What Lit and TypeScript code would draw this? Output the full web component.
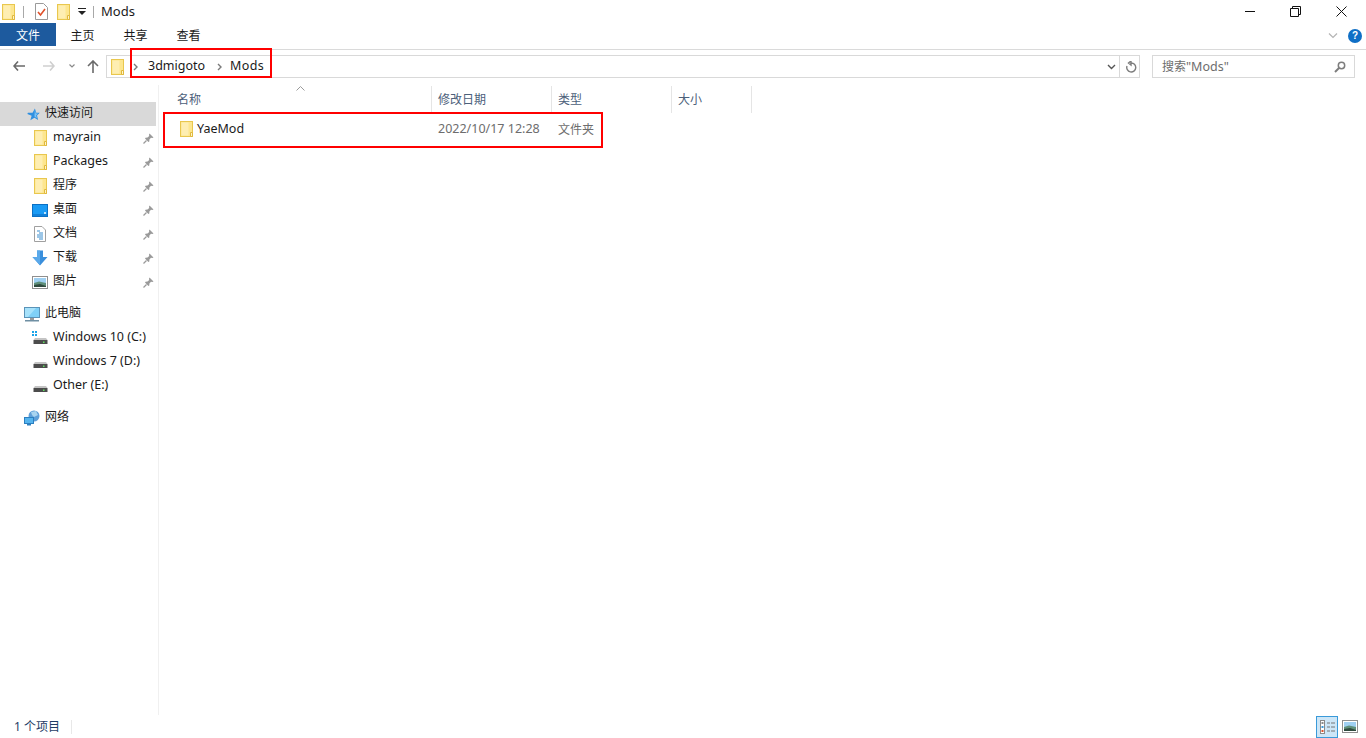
import { LitElement, html, css, svg } from 'lit';
import { customElement } from 'lit/decorators.js';

const folder = html`<svg width="13" height="16" viewBox="0 0 13 16">
  <rect x="0.5" y="0.5" width="12" height="15" fill="#fde68f" stroke="#e9c74e"></rect>
  <rect x="1.5" y="1.5" width="7" height="13" fill="#feeeb2"></rect>
  <path d="M10.5 15.5V11.5H12.5V15.5Z" fill="#fff4c9" stroke="#e0b93e"></path>
</svg>`;

const chev = html`<svg width="7" height="8" viewBox="0 0 7 8"><path d="M2 1l3 3-3 3" fill="none" stroke="#7a7a7a" stroke-width="1.4"></path></svg>`;

const pin = html`<svg width="11" height="11" viewBox="0 0 11 11">
  <path d="M6.5 0.5L10.5 4.5 9.3 5 8 4.8 6.4 6.5 6.3 8.5 5.4 9 2 5.6 2.5 4.7 4.5 4.6 6.2 3 6 1.7Z" fill="#9a9a9a"></path>
  <path d="M3.5 7.5L0.5 10.5" stroke="#9a9a9a" stroke-width="1.2"></path>
</svg>`;

const star = html`<svg class="star" width="13" height="13" viewBox="0 0 14 14">
  <path d="M8.5 0.5L10 5 13.8 5.2 10.8 8 12 13 8 10.4 3.6 13.2 5 8.4 0.4 6.4 1 5.2 6 5Z" fill="#2f8fe0"></path>
  <path d="M8.5 2L9.4 5.8 12 6 9.8 7.8 10.6 11 8 9.2Z" fill="#7cc3f5"></path>
</svg>`;

const desktop = html`<svg width="16" height="13" viewBox="0 0 16 13">
  <rect x="0.5" y="0.5" width="15" height="12" fill="#1a9bf5" stroke="#0c70c4"></rect>
  <rect x="1" y="10" width="14" height="2" fill="#1180d8"></rect>
  <rect x="12" y="8" width="2" height="2" fill="#bfe3fb"></rect>
</svg>`;

const doc = html`<svg width="12" height="16" viewBox="0 0 12 16">
  <path d="M0.5 0.5H8L11.5 4V15.5H0.5Z" fill="#fff" stroke="#a0a0a0"></path>
  <path d="M3 5H6M5 7H9M3 9H9M3 11H9M5 13H9" stroke="#3a8ecf" stroke-width="1"></path>
</svg>`;

const download = html`<svg width="16" height="16" viewBox="0 0 16 16">
  <path d="M5 0.5H11V7H15.5L8 15.5 0.5 7H5Z" fill="#3a8fdc"></path>
  <path d="M5 0.5H8V15L0.5 7H5Z" fill="#5aa9ea"></path>
</svg>`;

const picture = html`<svg width="16" height="13" viewBox="0 0 16 13">
  <rect x="0.5" y="0.5" width="15" height="12" fill="#fff" stroke="#8f8f8f"></rect>
  <rect x="2" y="2" width="12" height="5" fill="#9fd0f2"></rect>
  <path d="M2 7L7 5.5 14 7V11H2Z" fill="#5f8f7a"></path>
  <path d="M2 9L8 8 14 10V11H2Z" fill="#2f4a3e"></path>
</svg>`;

const monitor = html`<svg width="16" height="15" viewBox="0 0 16 15">
  <rect x="0.5" y="0.5" width="15" height="10" fill="#7fd0f7" stroke="#5a93b8"></rect>
  <path d="M1 1H12L4 10H1Z" fill="#a7e2fb"></path>
  <rect x="6" y="11" width="4" height="2" fill="#9a9a9a"></rect>
  <rect x="1" y="13" width="14" height="1.5" fill="#6f8fa3"></rect>
</svg>`;

const drive = (win: boolean) => html`<svg width="16" height="14" viewBox="0 0 16 14">
  ${win ? svg`<path d="M0 0H2V2H0ZM3 0H5V2H3ZM0 3H2V5H0ZM3 3H5V5H3Z" fill="#1aa3e8"></path>` : ''}
  <path d="M3 7H14L15.5 9H1.5Z" fill="#c4c4c4"></path>
  <rect x="1.5" y="9" width="14" height="4" fill="#4c4c4c"></rect>
  <rect x="11" y="10.5" width="1.5" height="1.5" fill="#5fe05f"></rect>
</svg>`;

const network = html`<svg width="16" height="16" viewBox="0 0 16 16">
  <circle cx="10" cy="6" r="5.5" fill="#5f9fd8"></circle>
  <path d="M7 2L12 1 14 5 10 7 8 5Z" fill="#a8d4f0"></path>
  <rect x="0.5" y="7.5" width="9" height="6" fill="#55b4ee" stroke="#2c7fc0"></rect>
  <rect x="3" y="14" width="4" height="1.5" fill="#2c7fc0"></rect>
</svg>`;

type NavRow = { icon: unknown; label: string };

const quick: NavRow[] = [
  { icon: folder, label: 'mayrain' },
  { icon: folder, label: 'Packages' },
  { icon: folder, label: '程序' },
  { icon: desktop, label: '桌面' },
  { icon: doc, label: '文档' },
  { icon: download, label: '下载' },
  { icon: picture, label: '图片' },
];

const drives: NavRow[] = [
  { icon: drive(true), label: 'Windows 10 (C:)' },
  { icon: drive(false), label: 'Windows 7 (D:)' },
  { icon: drive(false), label: 'Other (E:)' },
];

@customElement('app-root')
export class AppRoot extends LitElement {
  static styles = css`
    :host {
      display: flex;
      flex-direction: column;
      height: 100vh;
      background: #fff;
      color: #1a1a1a;
      font: 12px 'Noto Sans', 'Noto Sans CJK SC', sans-serif;
      overflow: hidden;
      position: relative;
    }
    svg { display: block; flex: none; }
    .l { font-size: 12.5px; }
    .t { margin-bottom: 2px; }

    .titlebar { height: 23px; display: flex; align-items: center; flex: none; padding-left: 2px; }
    .qat-sep { width: 1px; height: 12px; background: #a8a8a8; flex: none; }
    .qat-sep.a { margin-left: 8px; }
    .qat-sep.b { margin-left: 7px; }
    .qat-doc { margin-left: 11px; }
    .qat-folder { margin-left: 9px; }
    .qat-drop { margin-left: 8px; }
    .title { font-size: 13px; margin: 0 0 2px 7px; flex: 1; }
    .win { display: flex; padding-right: 19px; align-items: center; }
    .win svg + svg { margin-left: 34px; }
    .win svg:last-child { margin-left: 35px; }

    .tabs { height: 26px; border-bottom: 1px solid #dadada; display: flex; align-items: flex-start; flex: none; }
    .tab { height: 23px; line-height: 25px; text-align: center; }
    .tab.file-tab { width: 56px; background: #1d5a9e; color: #fff; }
    .tab.plain { width: 53px; }
    .tabs-right { margin-left: auto; display: flex; align-items: center; gap: 10px; padding: 6px 4px 0 0; }
    .help {
      width: 14px; height: 14px; border-radius: 50%; background: #0f6fc6; color: #fff;
      font: bold 10px/14px 'Liberation Sans', sans-serif; text-align: center;
    }

    .navrow { height: 35px; display: flex; align-items: flex-start; padding-top: 5px; box-sizing: border-box; flex: none; }
    .nav-btns { width: 106px; height: 22px; display: flex; align-items: center; flex: none; }
    .back { margin-left: 13px; }
    .fwd { margin-left: 18px; }
    .recent { margin-left: 14px; }
    .up { margin-left: 12px; }
    .addr {
      width: 1034px; height: 23px; box-sizing: border-box; border: 1px solid #d9d9d9;
      display: flex; align-items: center; padding-left: 4px;
    }
    .c1 { margin-left: 8px; }
    .crumb { margin: 0 0 2px 9px; }
    .c2 { margin-left: 11px; }
    .crumb.last { margin-left: 7px; letter-spacing: 0.4px; }
    .addr-end { margin-left: auto; display: flex; align-items: center; height: 100%; }
    .addr-sep { width: 1px; height: 100%; background: #d9d9d9; margin: 0 3px; }
    .refresh { margin: 0 2px; }
    .search {
      width: 203px; height: 23px; margin-left: 12px; box-sizing: border-box; border: 1px solid #d9d9d9;
      display: flex; align-items: center; justify-content: space-between; padding: 0 8px 0 9px; color: #6d6d6d;
    }

    .main { flex: 1; display: flex; min-height: 0; }
    .side { width: 158px; border-right: 1px solid #f0f0f0; flex: none; padding-top: 17px; }
    .group { margin-bottom: 8px; }
    .item { height: 24px; display: flex; align-items: center; width: 156px; box-sizing: border-box; }
    .item .t { margin-bottom: 4px; }
    .item.head { padding-left: 24px; }
    .item.sel { background: #d9d9d9; }
    .item.child { padding-left: 32px; }
    .ico { width: 16px; display: flex; justify-content: center; flex: none; margin-right: 5px; }
    .star { margin-left: 3px; }
    .pin { margin: 0 2px 0 auto; }

    .list { flex: 1; min-width: 0; position: relative; padding-top: 1px; }
    .cols { display: grid; grid-template-columns: 273px 120px 120px 80px; height: 27px; }
    .col {
      border-right: 1px solid #e5e5e5; color: #4c607a; padding-left: 6px; box-sizing: border-box;
      display: flex; align-items: center; position: relative;
    }
    .col.name { padding-left: 18px; }
    .sort { position: absolute; left: 137px; top: 0; }
    .row {
      display: grid; grid-template-columns: 273px 120px 120px; height: 24px; margin-top: 4px; align-items: center;
    }
    .fname { display: flex; align-items: center; gap: 4px; padding-left: 21px; }
    .meta { color: #6d6d6d; padding-left: 6px; margin-bottom: 1px; }

    .status { height: 23px; display: flex; align-items: center; flex: none; padding-left: 14px; color: #1f3d66; }
    .status-sep { width: 1px; height: 14px; background: #e8e8e8; margin-left: 11px; }
    .views { margin-left: auto; display: flex; align-items: center; gap: 4px; padding-right: 8px; }
    .view-on {
      width: 22px; height: 22px; box-sizing: border-box; background: #cde6f7; border: 1px solid #3a9ad9;
      display: flex; align-items: center; justify-content: center;
    }

    .mark { position: absolute; border: 2px solid #f00; box-sizing: border-box; pointer-events: none; }
    .addr-mark { left: 130px; top: 48px; width: 142px; height: 30px; }
    .row-mark { left: 163px; top: 112px; width: 440px; height: 36px; }
  `;

  private navItem(r: NavRow, pinned: boolean) {
    return html`<div class="item child">
      <span class="ico">${r.icon}</span>
      <span class="t ${/[a-z]/i.test(r.label) ? 'l' : ''}">${r.label}</span>
      ${pinned ? html`<span class="pin">${pin}</span>` : ''}
    </div>`;
  }

  render() {
    return html`
      <div class="titlebar">
        ${folder}
        <span class="qat-sep a"></span>
        <svg class="qat-doc" width="13" height="17" viewBox="0 0 13 17">
          <path d="M0.5 0.5H8.5L12.5 4.5V16.5H0.5Z" fill="#fff" stroke="#9a9a9a"></path>
          <path d="M3 9L5.5 12 10 6" fill="none" stroke="#e0502a" stroke-width="1.6"></path>
        </svg>
        <span class="qat-folder">${folder}</span>
        <svg class="qat-drop" width="8" height="7" viewBox="0 0 8 7"><path d="M0 0H8V1H0ZM0 3H8L4 7Z" fill="#222"></path></svg>
        <span class="qat-sep b"></span>
        <span class="title">Mods</span>
        <div class="win">
          <svg width="11" height="11" viewBox="0 0 11 11"><path d="M0 5.5H10" stroke="#111"></path></svg>
          <svg width="11" height="11" viewBox="0 0 11 11"><path d="M2.5 2.5V0.5H10.5V8.5H8.5M0.5 2.5H8.5V10.5H0.5Z" fill="none" stroke="#111"></path></svg>
          <svg width="11" height="11" viewBox="0 0 11 11"><path d="M0.5 0.5L10.5 10.5M10.5 0.5L0.5 10.5" stroke="#111"></path></svg>
        </div>
      </div>

      <div class="tabs">
        <div class="tab file-tab">文件</div>
        <div class="tab plain">主页</div>
        <div class="tab plain">共享</div>
        <div class="tab plain">查看</div>
        <div class="tabs-right">
          <svg width="10" height="6" viewBox="0 0 10 6"><path d="M1 0.5L5 4.5 9 0.5" fill="none" stroke="#b4b4b4" stroke-width="1.2"></path></svg>
          <div class="help">?</div>
        </div>
      </div>

      <div class="navrow">
        <div class="nav-btns">
          <svg class="back" width="12" height="10" viewBox="0 0 12 10"><path d="M5 0.5L1 5 5 9.5M1 5H12" fill="none" stroke="#6a6a6a" stroke-width="1.6"></path></svg>
          <svg class="fwd" width="12" height="10" viewBox="0 0 12 10"><path d="M7 0.5L11 5 7 9.5M0 5H11" fill="none" stroke="#cfcfcf" stroke-width="1.6"></path></svg>
          <svg class="recent" width="6" height="4" viewBox="0 0 6 4"><path d="M0.5 0.5L3 3 5.5 0.5" fill="none" stroke="#8a8a8a" stroke-width="1.2"></path></svg>
          <svg class="up" width="12" height="13" viewBox="0 0 12 13"><path d="M1 6L6 1 11 6M6 1V13" fill="none" stroke="#6a6a6a" stroke-width="1.6"></path></svg>
        </div>
        <div class="addr">
          ${folder}
          <span class="c1">${chev}</span>
          <span class="crumb l">3dmigoto</span>
          <span class="c2">${chev}</span>
          <span class="crumb last l">Mods</span>
          <div class="addr-end">
            <svg width="9" height="6" viewBox="0 0 9 6"><path d="M1 1L4.5 4.5 8 1" fill="none" stroke="#555" stroke-width="1.4"></path></svg>
            <span class="addr-sep"></span>
            <svg class="refresh" width="12" height="12" viewBox="0 0 12 12"><path d="M6 2A4.5 4.5 0 1 1 2 5M6 0V4L3.5 2Z" fill="none" stroke="#7d7d7d" stroke-width="1.4"></path></svg>
          </div>
        </div>
        <div class="search">
          <span class="t">搜索<span class="l">"Mods"</span></span>
          <svg width="12" height="12" viewBox="0 0 12 12"><circle cx="7.5" cy="4.5" r="3.2" fill="none" stroke="#7d7d7d" stroke-width="1.5"></circle><path d="M5 7L1 11" stroke="#7d7d7d" stroke-width="2"></path></svg>
        </div>
      </div>

      <div class="main">
        <div class="side">
          <div class="group">
            <div class="item head sel"><span class="ico">${star}</span><span class="t">快速访问</span></div>
            ${quick.map(r => this.navItem(r, true))}
          </div>
          <div class="group">
            <div class="item head"><span class="ico">${monitor}</span><span class="t">此电脑</span></div>
            ${drives.map(r => this.navItem(r, false))}
          </div>
          <div class="group">
            <div class="item head"><span class="ico">${network}</span><span class="t">网络</span></div>
          </div>
        </div>

        <div class="list">
          <div class="cols">
            <div class="col name"><span class="t">名称</span>
              <svg class="sort" width="9" height="5" viewBox="0 0 9 5"><path d="M0.5 4.5L4.5 0.5 8.5 4.5" fill="none" stroke="#9a9a9a"></path></svg>
            </div>
            <div class="col"><span class="t">修改日期</span></div>
            <div class="col"><span class="t">类型</span></div>
            <div class="col"><span class="t">大小</span></div>
          </div>
          <div class="row">
            <div class="fname">${folder}<span class="t l">YaeMod</span></div>
            <div class="meta l">2022/10/17 12:28</div>
            <div class="meta">文件夹</div>
          </div>
        </div>
      </div>

      <div class="status">
        <span class="t">1 个项目</span>
        <span class="status-sep"></span>
        <div class="views">
          <div class="view-on">
            <svg width="15" height="14" viewBox="0 0 15 14">
              <rect x="0.5" y="0.5" width="4" height="13" fill="#fff" stroke="#8a8a8a"></rect>
              <rect x="1.5" y="2" width="2" height="2" fill="#8a8a8a"></rect>
              <rect x="1.5" y="6" width="2" height="2" fill="#3a9ad9"></rect>
              <rect x="1.5" y="10" width="2" height="2" fill="#e0502a"></rect>
              <path d="M7 3H10M11 3H15M7 7H10M11 7H15M7 11H10M11 11H15" stroke="#777"></path>
            </svg>
          </div>
          ${picture}
        </div>
      </div>

      <div class="mark addr-mark"></div>
      <div class="mark row-mark"></div>
    `;
  }
}
